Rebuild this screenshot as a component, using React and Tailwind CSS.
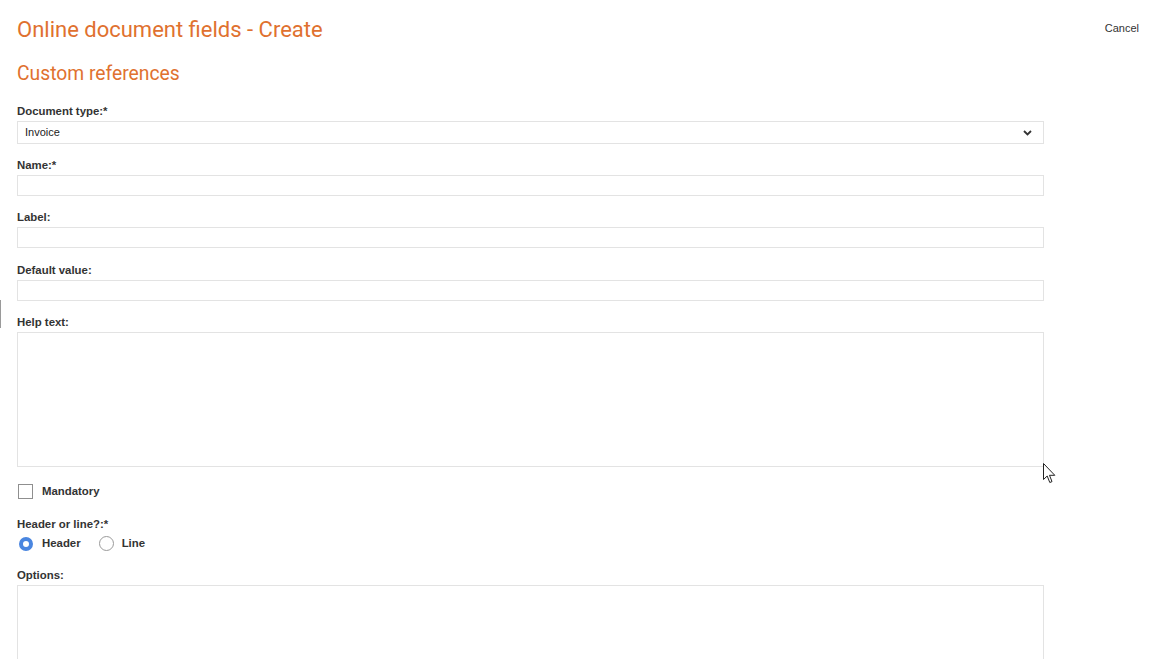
const label = "block text-[11.4px] leading-[14px] font-bold text-[#333] mb-[3px]";
const input = "block w-[1027px] border border-[#e3e3e3] bg-white";

function Field({ title, children, className = "" }) {
    return (
        <div className={className}>
            <span className={label}>{title}</span>
            {children}
        </div>
    );
}

function Pointer() {
    return (
        <svg className="absolute left-[1043px] top-[463px]" width="13" height="21" viewBox="0 0 13 21">
            <path d="M0.5 0.5 L0.5 16.5 L4.2 13 L6.8 19.5 L9 18.6 L6.5 12.3 L11.8 12.3 Z" fill="#fff" stroke="#222" strokeWidth="1" strokeLinejoin="round" />
        </svg>
    );
}

export default function App() {
    return (
        <div className="relative w-[1162px] h-[659px] overflow-hidden bg-white" style={{ fontFamily: '"Liberation Sans", Arial, sans-serif' }}>
            <div className="absolute left-0 top-[300px] h-[28px] w-px bg-[#9a9a9a]" />
            <div className="flex items-start justify-between pl-[17px] pr-[23px] pt-[16px]">
                <h1 className="text-[22px] leading-[28px] text-[#e0712f] font-['Roboto',sans-serif]">Online document fields - Create</h1>
                <button className="text-[11px] text-[#333] mt-[4px]">Cancel</button>
            </div>
            <div className="pl-[17px]">
                <h2 className="mt-[18px] text-[19.3px] leading-[24px] text-[#e0712f] font-['Roboto',sans-serif]">Custom references</h2>

                <Field title="Document type:*" className="mt-[18px]">
                    <div className={`${input} h-[23px] flex items-center justify-between px-[7px]`}>
                        <span className="text-[11px] text-[#222]">Invoice</span>
                        <svg width="9" height="6" viewBox="0 0 9 6" className="mr-[4px]">
                            <path d="M1 1 L4.5 4.5 L8 1" fill="none" stroke="#333" strokeWidth="1.8" />
                        </svg>
                    </div>
                </Field>
                <Field title="Name:*" className="mt-[14px]">
                    <div className={`${input} h-[21px]`} />
                </Field>
                <Field title="Label:" className="mt-[14px]">
                    <div className={`${input} h-[21px]`} />
                </Field>
                <Field title="Default value:" className="mt-[15px]">
                    <div className={`${input} h-[21px]`} />
                </Field>
                <Field title="Help text:" className="mt-[14px]">
                    <div className={`${input} h-[135px]`} />
                </Field>

                <label className="flex items-center gap-[9px] mt-[16px] ml-[1px]">
                    <span className="w-[15px] h-[15px] border border-[#8f8f8f] bg-white" />
                    <span className="text-[11.4px] font-bold text-[#333]">Mandatory</span>
                </label>

                <Field title="Header or line?:*" className="mt-[17px]">
                    <div className="flex items-center ml-[2px] mt-[4px]">
                        <span className="w-[14px] h-[14px] rounded-full border-[4px] border-[#4a86e0] bg-white" />
                        <span className="ml-[9px] text-[11.4px] font-bold text-[#333]">Header</span>
                        <span className="ml-[18px] w-[15px] h-[15px] rounded-full border border-[#9a9a9a] bg-white" />
                        <span className="ml-[8px] text-[11.4px] font-bold text-[#333]">Line</span>
                    </div>
                </Field>

                <Field title="Options:" className="mt-[16px]">
                    <div className={`${input} h-[135px]`} />
                </Field>
            </div>
            <Pointer />
        </div>
    );
}
